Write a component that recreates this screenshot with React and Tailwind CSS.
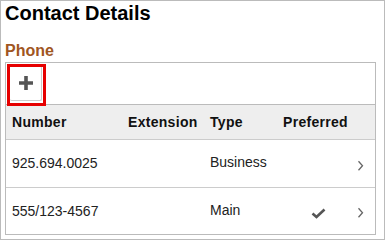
const phones = [
  { number: '925.694.0025', ext: '', type: 'Business', preferred: false, h: 'h-[48px] border-b border-[#ccc]' },
  { number: '555/123-4567', ext: '', type: 'Main', preferred: true, h: 'h-[46px]' },
];

const cols = 'grid grid-cols-[116px_82px_73px_1fr] pl-[6px]';

function Chevron() {
  return (
    <svg width="7" height="12" viewBox="0 0 7 12" className="absolute right-[11px] top-1/2 -translate-y-[35%]">
      <path d="M1.5 1.5 L5.5 6 L1.5 10.5" fill="none" stroke="#666" strokeWidth="1.3" />
    </svg>
  );
}

function Check() {
  return (
    <svg width="15" height="11" viewBox="0 0 15 11" className="ml-[28px] mt-[4px]">
      <path d="M1.5 5.5 L5.5 9 L13.5 1.5" fill="none" stroke="#555" strokeWidth="2.6" />
    </svg>
  );
}

export default function App() {
  return (
    <div className="w-[386px] h-[241px] bg-white" style={{ fontFamily: "'Liberation Sans', Arial, sans-serif" }}>
      <div className="w-[385px] h-[240px] border border-[#bbb] pl-[4px]">
        <h1 className="text-[20px] leading-[24px] font-bold text-black">Contact Details</h1>
        <h2 className="mt-[16px] text-[16px] leading-[20px] font-bold text-[#a0561f]">Phone</h2>

        <div className="relative mt-[1px] w-[371px] border border-[#bbb]">
          {/* toolbar */}
          <div className="h-[42px] border-b border-[#bbb] flex items-center pl-[4px]">
            <button className="w-[32px] h-[35px] bg-white border-r border-b border-[#ccc] rounded-[2px] flex items-center justify-center">
              <svg width="16" height="16" viewBox="0 0 16 16">
                <path d="M8 1 V15 M1 8 H15" stroke="#555" strokeWidth="3.6" />
              </svg>
            </button>
          </div>

          {/* highlight annotation */}
          <div className="absolute left-[1px] top-[1px] w-[39px] h-[42px] border-[3px] border-[#e60000]" />

          {/* header */}
          <div className={`${cols} h-[35px] items-center bg-[#eee] border-b border-[#ccc] text-[14px] font-bold tracking-[0.3px] text-[#111]`}>
            <span>Number</span>
            <span>Extension</span>
            <span>Type</span>
            <span>Preferred</span>
          </div>

          {phones.map((p) => (
            <div key={p.number} className={`${cols} relative items-center text-[14px] text-[#222] ${p.h}`}>
              <span>{p.number}</span>
              <span>{p.ext}</span>
              <span className="-mt-[2px]">{p.type}</span>
              <span>{p.preferred && <Check />}</span>
              <Chevron />
            </div>
          ))}
        </div>
      </div>
    </div>
  );
}
